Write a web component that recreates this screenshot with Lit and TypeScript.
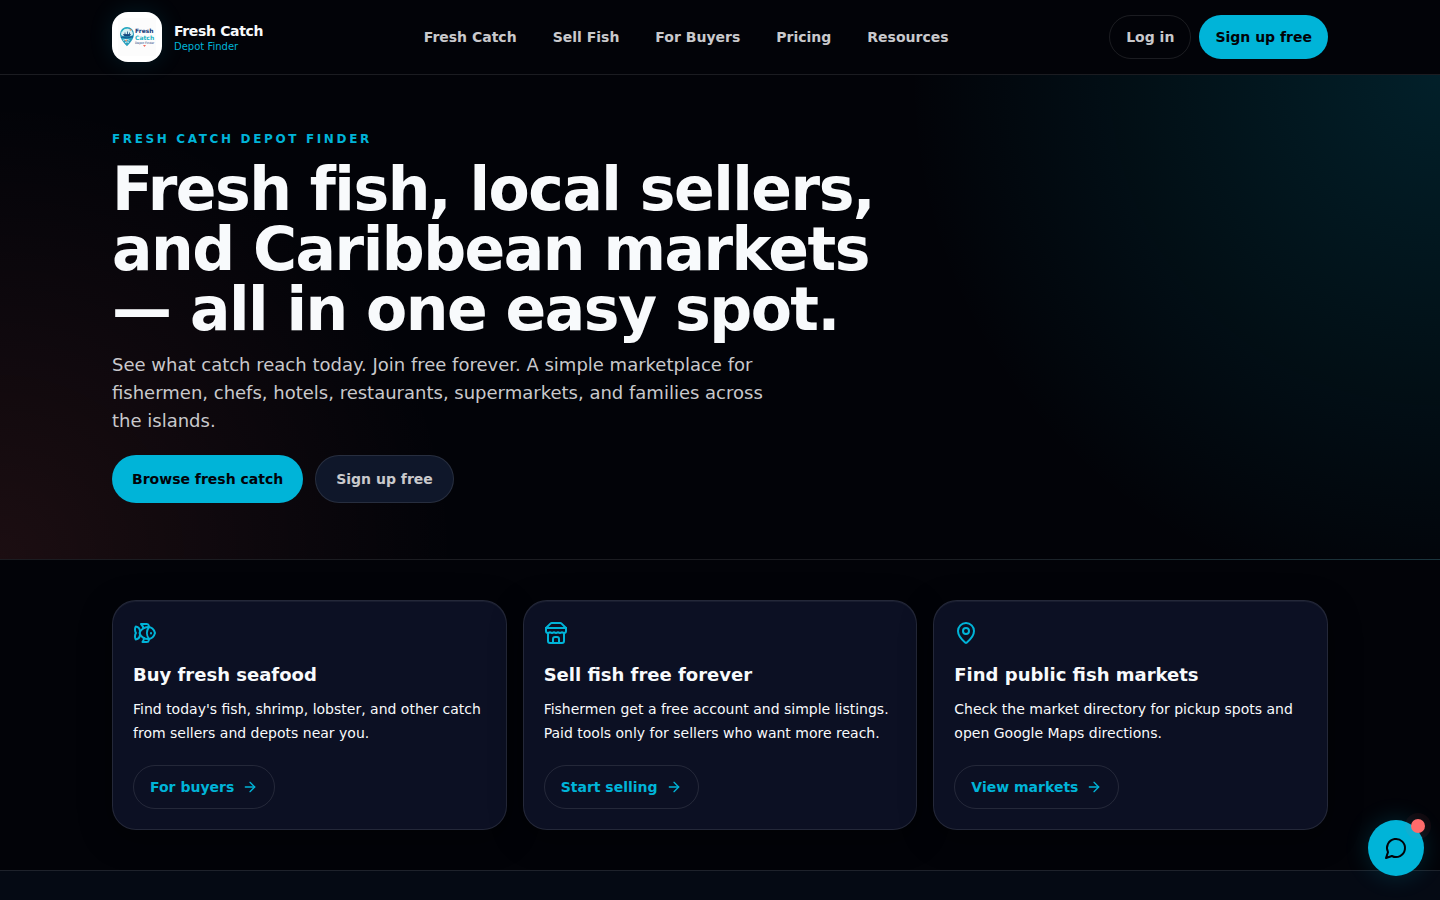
import { LitElement, html, css, svg } from "lit";
import { customElement } from "lit/decorators.js";

const icons = {
  fish: svg`<path d="M6.5 12c.94-3.46 4.94-6 8.5-6 3.56 0 6.06 2.54 7 6-.94 3.47-3.44 6-7 6s-7.56-2.53-8.5-6Z"/><path d="M18 12v.5"/><path d="M16 17.93a9.77 9.77 0 0 1 0-11.86"/><path d="M7 10.67C7 8 5.58 5.97 2.73 5.5c-1 1.5-1 5 .23 6.5-1.24 1.5-1.24 5-.23 6.5C5.58 18.03 7 16 7 13.33"/><path d="M10.46 7.26C10.2 5.88 9.17 4.24 8 3h5.8a2 2 0 0 1 1.98 1.67l.23 1.4"/><path d="m16.01 17.93-.23 1.4A2 2 0 0 1 13.8 21H9.5a5.96 5.96 0 0 0 1.49-3.98"/>`,
  store: svg`<path d="m2 7 4.41-4.41A2 2 0 0 1 7.83 2h8.34a2 2 0 0 1 1.42.59L22 7"/><path d="M4 12v8a2 2 0 0 0 2 2h12a2 2 0 0 0 2-2v-8"/><path d="M15 22v-4a2 2 0 0 0-2-2h-2a2 2 0 0 0-2 2v4"/><path d="M2 7h20"/><path d="M22 7v3a2 2 0 0 1-2 2a2.7 2.7 0 0 1-1.59-.63.7.7 0 0 0-.82 0A2.7 2.7 0 0 1 16 12a2.7 2.7 0 0 1-1.59-.63.7.7 0 0 0-.82 0A2.7 2.7 0 0 1 12 12a2.7 2.7 0 0 1-1.59-.63.7.7 0 0 0-.82 0A2.7 2.7 0 0 1 8 12a2.7 2.7 0 0 1-1.59-.63.7.7 0 0 0-.82 0A2.7 2.7 0 0 1 4 12a2 2 0 0 1-2-2V7"/>`,
  pin: svg`<path d="M20 10c0 4.993-5.539 10.193-7.399 11.799a1 1 0 0 1-1.202 0C9.539 20.193 4 14.993 4 10a8 8 0 0 1 16 0"/><circle cx="12" cy="10" r="3"/>`,
  arrow: svg`<path d="M5 12h14"/><path d="m12 5 7 7-7 7"/>`,
  chat: svg`<path d="M7.9 20A9 9 0 1 0 4 16.1L2 22Z"/>`,
};

type IconName = keyof typeof icons;

const icon = (name: IconName) => html`<svg class="icon ${name}" viewBox="0 0 24 24" aria-hidden="true">${icons[name]}</svg>`;

const logo = html`<svg class="mark" viewBox="0 0 50 50" aria-hidden="true">
  <rect x="6" y="6" width="38" height="38" fill="#fcfcfc" />
  <path d="M15 34.300c-3-3.400-7-7.300-7-12.300a7 7 0 0 1 14 0c0 5-4 8.900-7 12.300z" fill="#2a9fbd" />
  <path d="M9 22.500a6 6 0 0 1 12 0c-1 1.200-2 1.500-3 1.500h-6c-1.500 0-2.300-.5-3-1.500z" fill="#d5f0f3" />
  <path d="M10 19.500c1-2.500 3-3.500 5-3.600" stroke="#22b8c6" stroke-width="1" fill="none" />
  <path d="M11.500 22.500h7l-1 1.500h-5zM13 20.500v2M15.500 19.500v3M17.500 20.500v2" stroke="#14467e" stroke-width=".8" fill="#14467e" />
  <path d="M9 25.500c3-1.200 5 1.400 8 0 1.500-.7 2.500-.8 4-.5" stroke="#135a93" stroke-width="1.300" fill="none" />
  <path d="M11 28.300c2-1 4-1.200 6.500 0M13 30.500c1.500-.8 2.500-.6 4-.2" stroke="#e7fafa" stroke-width=".9" fill="none" />
  <circle cx="18.500" cy="17.800" r=".9" fill="#f08a5d" />
  <path d="M12.500 28.500l2.500-1v2z" fill="#f0926b" />
  <text class="mark-name" x="23" y="21" fill="#123b7a">Fresh</text>
  <text class="mark-name" x="23" y="28" fill="#21b3c4">Catch</text>
  <text class="mark-sub" x="23" y="32" fill="#123b7a">Depot Finder</text>
  <path d="M31 33h3l-1.500 2z" fill="#f26b5e" />
</svg>`;

const navLinks = ["Fresh Catch", "Sell Fish", "For Buyers", "Pricing", "Resources"];

const cards: { icon: IconName; title: string; text: string; action: string }[] = [
  {
    icon: "fish",
    title: "Buy fresh seafood",
    text: "Find today's fish, shrimp, lobster, and other catch from sellers and depots near you.",
    action: "For buyers",
  },
  {
    icon: "store",
    title: "Sell fish free forever",
    text: "Fishermen get a free account and simple listings. Paid tools only for sellers who want more reach.",
    action: "Start selling",
  },
  {
    icon: "pin",
    title: "Find public fish markets",
    text: "Check the market directory for pickup spots and open Google Maps directions.",
    action: "View markets",
  },
];

@customElement("app-root")
export class AppRoot extends LitElement {
  static styles = css`
    :host {
      --aqua: #00b4d8;
      --ink: #020308;
      --line: rgba(255, 255, 255, 0.1);
      display: flex;
      flex-direction: column;
      min-height: 100vh;
      background: var(--ink);
      color: #f8fafc;
      font-family: "DejaVu Sans", sans-serif;
      font-size: 14px;
      line-height: 20px;
    }
    * {
      box-sizing: border-box;
    }
    h1, h2, p {
      margin: 0;
    }
    a {
      color: inherit;
      text-decoration: none;
    }
    .icon {
      display: block;
      width: 24px;
      height: 24px;
      fill: none;
      stroke: currentColor;
      stroke-width: 2;
      stroke-linecap: round;
      stroke-linejoin: round;
    }
    .icon.arrow {
      width: 16px;
      height: 16px;
    }
    .wrap {
      width: 100%;
      max-width: 1280px;
      margin: 0 auto;
      padding: 0 32px;
    }
    .header {
      flex: none;
      border-bottom: 1px solid var(--line);
    }
    .bar {
      display: flex;
      align-items: center;
      justify-content: space-between;
      padding-top: 12px;
      padding-bottom: 12px;
    }
    .brand {
      display: flex;
      align-items: center;
      gap: 12px;
    }
    .mark {
      display: block;
      width: 50px;
      height: 50px;
      border-radius: 16px;
      background: #fff;
      box-shadow: 0 0 24px rgba(0, 180, 216, 0.14);
    }
    .mark-name {
      font-size: 6px;
      font-weight: 700;
    }
    .mark-sub {
      font-size: 3px;
    }
    .brand-text {
      display: flex;
      flex-direction: column;
    }
    .brand-name {
      font-weight: 700;
      line-height: 18px;
      letter-spacing: -0.025em;
    }
    .brand-sub {
      color: var(--aqua);
      font-size: 10px;
      line-height: 13px;
    }
    .nav {
      display: flex;
      gap: 36px;
      color: #c9c9cc;
      font-weight: 700;
    }
    .actions {
      display: flex;
      gap: 8px;
    }
    .btn {
      display: inline-flex;
      align-items: center;
      justify-content: center;
      gap: 8px;
      height: 44px;
      padding: 0 16px;
      border: 1px solid var(--line);
      border-radius: 24px;
      color: #c9c9cc;
      font-weight: 700;
      white-space: nowrap;
    }
    .btn.solid {
      border: 0;
      background: var(--aqua);
      color: var(--ink);
    }
    .btn.large {
      height: 48px;
      padding: 0 20px;
    }
    .btn.navy {
      background: #0f172a;
    }
    .btn.text {
      color: var(--aqua);
    }
    .hero {
      flex: none;
      padding: 56px 0;
      border-bottom: 1px solid var(--line);
      background:
        radial-gradient(circle at 100% 0%, rgba(0, 180, 216, 0.16), transparent 35%),
        radial-gradient(circle at 0% 100%, rgba(255, 107, 107, 0.1), transparent 30%);
    }
    .eyebrow {
      color: var(--aqua);
      font-size: 12px;
      font-weight: 700;
      line-height: 16px;
      letter-spacing: 0.22em;
      text-transform: uppercase;
    }
    .title {
      max-width: 768px;
      margin-top: 12px;
      font-size: 60px;
      font-weight: 700;
      line-height: 60px;
      letter-spacing: -0.025em;
    }
    .lead {
      max-width: 672px;
      margin-top: 12px;
      color: #c9c9cc;
      font-size: 18px;
      line-height: 28px;
    }
    .cta {
      display: flex;
      gap: 12px;
      margin-top: 20px;
    }
    .cards {
      display: grid;
      grid-template-columns: repeat(3, 1fr);
      gap: 16px;
      padding-top: 40px;
      padding-bottom: 40px;
    }
    .card {
      display: flex;
      flex-direction: column;
      align-items: flex-start;
      padding: 20px;
      border: 1px solid var(--line);
      border-radius: 24px;
      background: #0c1023;
      box-shadow: 0 8px 32px rgba(0, 0, 0, 0.4), inset 0 1px 0 rgba(255, 255, 255, 0.05);
    }
    .card .icon.fish, .card .icon.store, .card .icon.pin {
      color: var(--aqua);
    }
    .card-title {
      margin-top: 16px;
      font-size: 18px;
      font-weight: 700;
      line-height: 28px;
    }
    .card-text {
      margin: 8px 0 20px;
      line-height: 24px;
    }
    .next {
      flex: 1 0 auto;
      border-top: 1px solid var(--line);
      background: #050a14;
    }
    .chat-btn {
      position: fixed;
      right: 16px;
      bottom: 24px;
      display: flex;
      align-items: center;
      justify-content: center;
      width: 56px;
      height: 56px;
      padding: 0;
      border: 0;
      border-radius: 50%;
      background: var(--aqua);
      color: var(--ink);
      box-shadow: 0 0 24px rgba(0, 180, 216, 0.2);
    }
    .dot {
      position: absolute;
      top: -1px;
      right: -1px;
      width: 14px;
      height: 14px;
      border-radius: 50%;
      background: #ff6b6b;
      box-shadow: 0 0 0 6px rgba(255, 107, 107, 0.06);
    }
  `;

  render() {
    return html`
      <header class="header">
        <div class="wrap bar">
          <a class="brand" href="#">
            ${logo}
            <span class="brand-text">
              <span class="brand-name">Fresh Catch</span>
              <span class="brand-sub">Depot Finder</span>
            </span>
          </a>
          <nav class="nav" aria-label="Main">${navLinks.map((label) => html`<a href="#">${label}</a>`)}</nav>
          <div class="actions">
            <a class="btn" href="#">Log in</a>
            <a class="btn solid" href="#">Sign up free</a>
          </div>
        </div>
      </header>
      <section class="hero">
        <div class="wrap">
          <p class="eyebrow">Fresh Catch Depot Finder</p>
          <h1 class="title">Fresh fish, local sellers, and Caribbean markets — all in one easy spot.</h1>
          <p class="lead">See what catch reach today. Join free forever. A simple marketplace for fishermen, chefs, hotels, restaurants, supermarkets, and families across the islands.</p>
          <div class="cta">
            <a class="btn solid large" href="#">Browse fresh catch</a>
            <a class="btn navy large" href="#">Sign up free</a>
          </div>
        </div>
      </section>
      <section class="wrap cards">
        ${cards.map(
          (card) => html`<article class="card">
            ${icon(card.icon)}
            <h2 class="card-title">${card.title}</h2>
            <p class="card-text">${card.text}</p>
            <a class="btn text" href="#">${card.action} ${icon("arrow")}</a>
          </article>`
        )}
      </section>
      <section class="next"></section>
      <button class="chat-btn" type="button" aria-label="Open chat">${icon("chat")}<span class="dot"></span></button>
    `;
  }
}
